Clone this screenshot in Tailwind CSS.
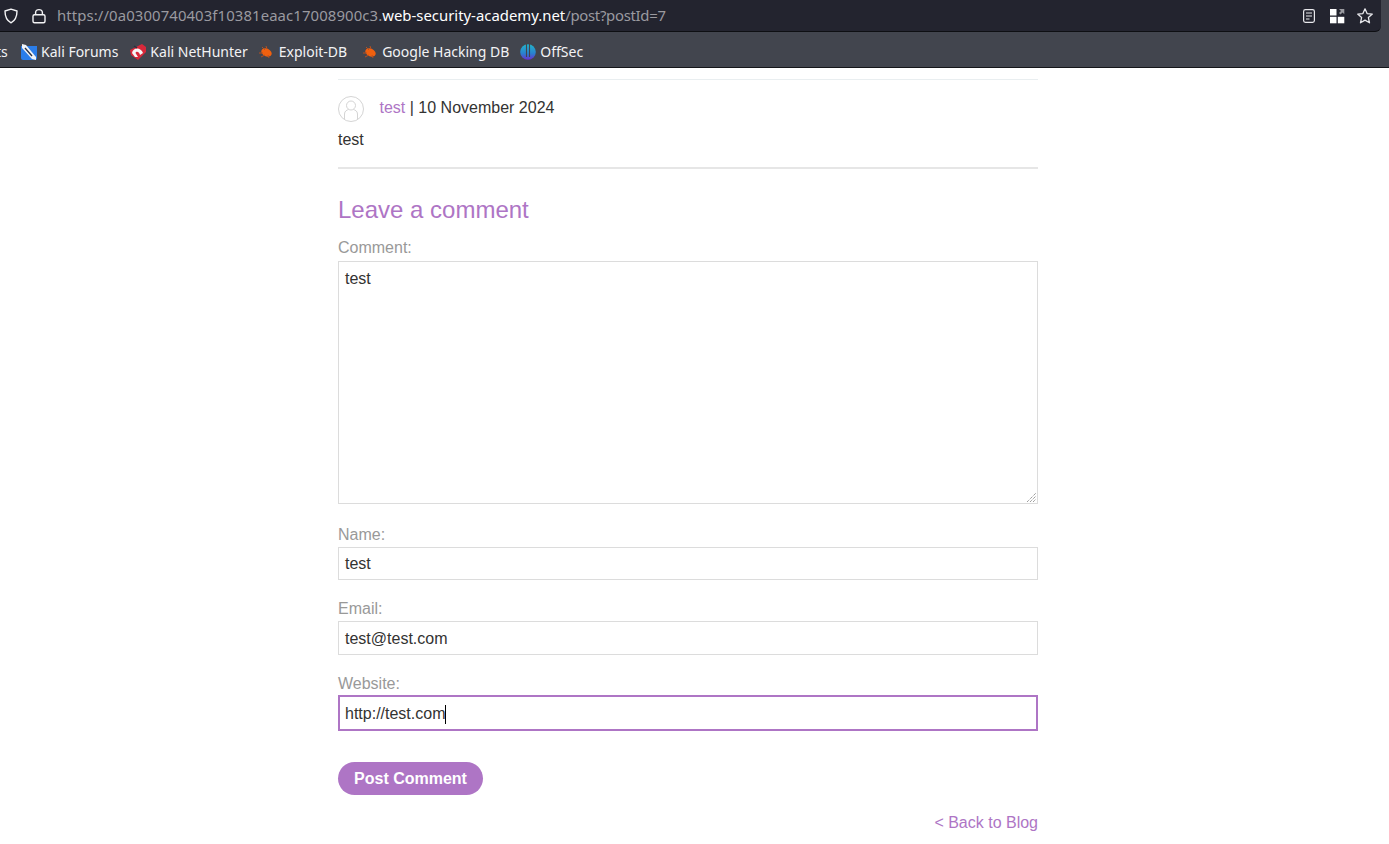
<!DOCTYPE html>
<html lang="en">
<head>
  <meta charset="UTF-8" />
  <title>Leave a comment</title>
  <script src="https://cdn.jsdelivr.net/npm/@tailwindcss/browser@4"></script>
</head>
<body class="bg-white h-[844px] overflow-hidden font-['Liberation_Sans',sans-serif] text-[16px] text-[#333332]">

  <!-- Browser chrome -->
  <div class="h-[68px] bg-[#42454e] border-b border-[#15161a] font-['Noto_Sans',sans-serif]">
    <div class="h-[32px] bg-[#23242f] border-b border-[#0e0f13] rounded-br-[6px] mr-[8px] flex items-center pl-[3px] pr-[7px]">
      <svg class="w-[16px] h-[16px]" viewBox="0 0 16 16" fill="none" stroke="#f3f3f5" stroke-width="1.4"><path d="M8 1.2 L14 3 C14 9 12.5 12.5 8 14.8 C3.5 12.5 2 9 2 3 Z" stroke-linejoin="round"/></svg>
      <svg class="w-[16px] h-[16px] ml-[12px]" viewBox="0 0 16 16" fill="none" stroke="#f3f3f5" stroke-width="1.4"><rect x="2" y="6.8" width="12" height="8" rx="1.5"/><path d="M4.6 6.8 V4.5 C4.6 .6 11.4 .6 11.4 4.5 V6.8"/></svg>
      <div class="ml-[10px] text-[14.9px] whitespace-nowrap text-[#9a9aa0]"><span class="tracking-[0.1px]">https://0a0300740403f10381eaac17008900c3.</span><span class="text-white">web-security-academy.net</span><span class="tracking-[-0.3px]">/post?postId=7</span></div>
      <div class="ml-auto flex items-center gap-[12px]">
        <svg class="w-[16px] h-[16px]" viewBox="0 0 16 16" fill="none" stroke="#e8e8ec" stroke-width="1.2"><rect x="2.6" y="1.6" width="10.8" height="12.8" rx="1.8"/><path d="M5 5h6M5 8h6M5 11h3.5"/></svg>
        <svg class="w-[16px] h-[16px]" viewBox="0 0 16 16" fill="#fff"><rect x="1" y="1" width="6.5" height="6.5"/><rect x="1" y="8.8" width="6.5" height="6.5"/><rect x="8.8" y="8.8" width="6.5" height="6.5"/><path d="M10 1h5.3v5.3l-1.8-1.8-2 2-1.5-1.5 2-2z" fill="#9a9aa0"/></svg>
        <svg class="w-[18px] h-[18px] -ml-[1px]" viewBox="0 0 18 18" fill="none" stroke="#e8e8ec" stroke-width="1.3" stroke-linejoin="round"><path d="M9 1.8 L11.1 6.6 L16.3 7.1 L12.4 10.6 L13.5 15.8 L9 13.1 L4.5 15.8 L5.6 10.6 L1.7 7.1 L6.9 6.6 Z"/></svg>
      </div>
    </div>
    <div class="h-[35px] flex items-center text-[14px] text-[#f3f3f5] whitespace-nowrap -ml-[4px] pt-[4px]">
      <span class="w-[13px]">ts</span>
      <svg class="w-[16px] h-[16px] ml-[12px]" viewBox="0 0 16 16"><path d="M0 2 H16 V14 C16 15 15 16 14 16 H2 C1 16 0 15 0 14 Z" fill="#2b7de9"/><path d="M1 0 L5 1 L15 13 L15 16 L11 15 L1 4 Z" fill="#f2f4f7"/><path d="M4 4 L11 12" stroke="#2c3040" stroke-width="1.4"/></svg>
      <span class="ml-[4px]">Kali Forums</span>
      <svg class="w-[16px] h-[16px] ml-[12px]" viewBox="0 0 16 16"><path d="M0 6 L12 0 L16 3 V8 L8 16 L1 11 Z" fill="#d8283a"/><path d="M2 9 C3 3 11 3 13 9 L10 11 C9 7 6 7 5.5 9 L8 13 L5 13 Z" fill="#f6f6f6"/><path d="M4 2 L7 4" stroke="#2c3040" stroke-width="1.5"/></svg>
      <span class="ml-[4px]">Kali NetHunter</span>
      <svg class="w-[16px] h-[16px] ml-[10px]" viewBox="0 0 16 16"><ellipse cx="8.5" cy="8.5" rx="5.5" ry="3.8" transform="rotate(25 8.5 8.5)" fill="#f0600f"/><path d="M1 9 L5 9 M3 13 L7 11 M4 3 L7 6 M8 2 L9 5 M11 14 L10 11" stroke="#b9501f" stroke-width="1"/></svg>
      <span class="ml-[5px]">Exploit-DB</span>
      <svg class="w-[16px] h-[16px] ml-[15px]" viewBox="0 0 16 16"><ellipse cx="8.5" cy="8.5" rx="5.5" ry="3.8" transform="rotate(25 8.5 8.5)" fill="#f0600f"/><path d="M1 9 L5 9 M3 13 L7 11 M4 3 L7 6 M8 2 L9 5 M11 14 L10 11" stroke="#b9501f" stroke-width="1"/></svg>
      <span class="ml-[4px]">Google Hacking DB</span>
      <svg class="w-[16px] h-[16px] ml-[11px]" viewBox="0 0 16 16"><defs><linearGradient id="off" x1="0" y1="0" x2="0" y2="1"><stop offset="0" stop-color="#22b5c9"/><stop offset=".6" stop-color="#2a80d0"/><stop offset="1" stop-color="#6a2fd0"/></linearGradient></defs><circle cx="8" cy="8" r="7.8" fill="url(#off)"/><path d="M6.5 0v13M9.5 0v13" stroke="#42454e" stroke-width="1.1"/></svg>
      <span class="ml-[4px]">OffSec</span>
    </div>
  </div>

  <!-- Page -->
  <div class="w-[700px] ml-[338px]">
    <div class="border-t border-[#e9eef0] mt-[11px] pt-[16px]">
      <div class="flex items-center h-[26px]">
        <svg class="w-[26px] h-[26px]" viewBox="0 0 26 26" fill="none" stroke="#d4d4d4" stroke-width="1"><circle cx="13" cy="13" r="12.5"/><circle cx="13" cy="9.5" r="4.5"/><path d="M6.5 23 V18 C6.5 15 9 14 10.5 13.5 M19.5 23 V18 C19.5 15 17 14 15.5 13.5"/></svg>
        <p class="ml-[15.5px] -mt-[3px]"><span class="text-[#ae75c5]">test</span> | 10 November 2024</p>
      </div>
      <p class="mt-[6px] leading-[24px]">test</p>
    </div>
    <div class="h-[2px] bg-[#e6e6e6] mt-[15px]"></div>

    <h2 class="text-[24px] leading-[28px] text-[#ae75c5] mt-[27px]">Leave a comment</h2>

    <form>
      <label class="block text-[#999] leading-[18px] mt-[15px]">Comment:</label>
      <div class="relative mt-[4px]">
        <div class="h-[243px] border border-[#dcdcdc] px-[6px] pt-[7px] leading-[20px]">test</div>
        <svg class="absolute right-[1px] bottom-[1px] w-[11px] h-[11px]" viewBox="0 0 11 11" stroke="#777" stroke-width="1" stroke-dasharray="1 1"><path d="M1 10 L10 1M4 10 L10 4M7 10 L10 7"/></svg>
      </div>

      <label class="block text-[#999] leading-[18px] mt-[22px]">Name:</label>
      <div class="h-[33px] border border-[#dcdcdc] px-[6px] flex items-center mt-[3px]">test</div>

      <label class="block text-[#999] leading-[18px] mt-[20px]">Email:</label>
      <div class="h-[34px] border border-[#dcdcdc] px-[6px] pt-[1px] flex items-center mt-[3px]">test@test.com</div>

      <label class="block text-[#999] leading-[18px] mt-[20px]">Website:</label>
      <div class="h-[36px] border-2 border-[#ae75c5] px-[5px] pt-[2px] flex items-center mt-[2px]">http://test.com<span class="w-px h-[19px] bg-black"></span></div>

      <button type="button" class="block mt-[31px] h-[33px] w-[145px] rounded-full bg-[#ae75c5] text-white font-bold">Post Comment</button>
    </form>

    <p class="text-right text-[#ae75c5] mt-[19px] leading-[18px]">&lt; Back to Blog</p>
  </div>

</body>
</html>
